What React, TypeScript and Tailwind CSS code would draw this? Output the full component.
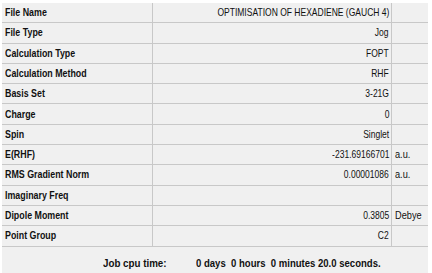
import React from "react";

const rows: [string, string, string][] = [
  ["File Name", "OPTIMISATION OF HEXADIENE (GAUCH 4)", ""],
  ["File Type", "Jog", ""],
  ["Calculation Type", "FOPT", ""],
  ["Calculation Method", "RHF", ""],
  ["Basis Set", "3-21G", ""],
  ["Charge", "0", ""],
  ["Spin", "Singlet", ""],
  ["E(RHF)", "-231.69166701", "a.u."],
  ["RMS Gradient Norm", "0.00001086", "a.u."],
  ["Imaginary Freq", "", ""],
  ["Dipole Moment", "0.3805", "Debye"],
  ["Point Group", "C2", ""],
];

export default function App() {
  return (
    <div
      className="w-[432px] h-[273px] bg-white overflow-hidden"
      style={{ fontFamily: '"Liberation Sans", Arial, sans-serif' }}
    >
      <div className="ml-[2px] mt-[3px] w-[426px] bg-[#f0f0f0] h-[270px] flex flex-col">
        <div className="flex flex-col">
          {rows.map(([k, v, u], i) => (
            <div
              key={i}
              className="flex h-[20.3px] border-b border-[#c8c8c8] text-[11.5px] text-[#111]"
            >
              <div className="w-[151px] shrink-0 border-r border-[#c8c8c8] flex items-center pl-[3px] font-bold">
                <span className="inline-block whitespace-nowrap origin-left scale-x-[0.77]">{k}</span>
              </div>
              <div className="w-[239px] shrink-0 border-r border-[#c8c8c8] flex items-center justify-end pr-[2px]">
                <span className="inline-block whitespace-nowrap origin-right scale-x-[0.74]">{v}</span>
              </div>
              <div className="flex-1 flex items-center pl-[3px]">
                <span className="inline-block whitespace-nowrap origin-left scale-x-[0.8]">{u}</span>
              </div>
            </div>
          ))}
        </div>
        <div className="flex-1 flex items-center text-[11.5px] font-bold text-[#111] pt-[8px]">
          <span className="ml-[101px] w-[93px] inline-block whitespace-nowrap origin-left scale-x-[0.85]">Job cpu time:</span>
          <span className="inline-block whitespace-pre origin-left scale-x-[0.83]">0 days  0 hours  0 minutes 20.0 seconds.</span>
        </div>
      </div>
    </div>
  );
}
